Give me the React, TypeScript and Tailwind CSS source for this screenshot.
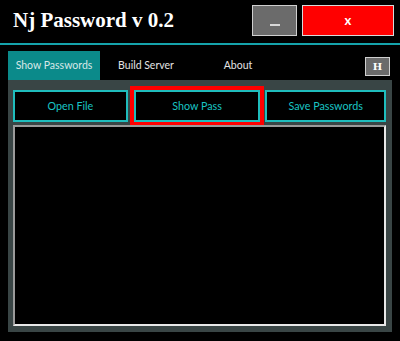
import React, { useState } from 'react';

const tabs = ['Show Passwords', 'Build Server', 'About'];

const App: React.FC = () => {
  const [tab, setTab] = useState('Show Passwords');
  const [text, setText] = useState('');

  return (
    <div className="w-[400px] h-[341px] bg-black overflow-hidden select-none" style={{ fontFamily: 'Lato, "Noto Sans", sans-serif' }}>
      {/* title bar */}
      <div className="flex items-start h-[43px] pl-[13px] pr-[6px] pt-[5px]">
        <h1 className="flex-1 mt-[3px] text-[21px] leading-[24px] font-bold text-white" style={{ fontFamily: '"Liberation Serif", "DejaVu Serif", serif' }}>
          Nj Password v 0.2
        </h1>
        <button className="w-[45px] h-[31px] bg-[#6b6b6b] border border-[#cfcfcf] flex items-center justify-center">
          <span className="block w-[10px] h-[2px] bg-[#d8d8d8] mt-[8px]" />
        </button>
        <button className="ml-[5px] w-[92px] h-[31px] bg-[#ff0000] border border-[#d8d8d8] text-white font-bold text-[13px] leading-none flex items-center justify-center">
          x
        </button>
      </div>
      <div className="h-[2px] bg-[#15a3ab]" />

      {/* tabs */}
      <div className="flex items-end h-[35px] pl-[8px] pr-[10px] pt-[6px]">
        {tabs.map((t) => (
          <button
            key={t}
            onClick={() => setTab(t)}
            className={`w-[92px] h-[29px] text-[10.5px] ${t === tab ? 'bg-[#0b8a8a] text-[#d8e8e8]' : 'text-[#e4e4e4]'}`}
          >
            {t}
          </button>
        ))}
        <div className="flex-1" />
        <button className="self-start mt-[6px] w-[25px] h-[19px] bg-[#6b6b6b] border border-[#d0d0d0] text-white text-[10px] font-bold leading-none flex items-center justify-center" style={{ fontFamily: '"DejaVu Serif", serif' }}>
          H
        </button>
      </div>

      {/* panel */}
      <div className="mx-[8px] h-[252px] bg-[#394545] pl-[5px] pr-[6px] pt-[10px] pb-[6px] flex flex-col">
        <div className="flex h-[32px] text-[10.75px] text-[#19c4c4]">
          <button className="w-[115px] h-full bg-black border-2 border-[#1fbdbd]">Open File</button>
          <button className="ml-[6px] w-[127px] h-full bg-black border-2 border-[#1fbdbd] outline-[4px] outline-solid outline-[#ff0000]">Show Pass</button>
          <button className="ml-[5px] w-[121px] h-full bg-black border-2 border-[#1fbdbd]">Save Passwords</button>
        </div>
        <textarea
          value={text}
          onChange={(e) => setText(e.target.value)}
          className="mt-[3px] flex-1 w-[373px] bg-black text-white border-2 border-t-[#9a9a9a] border-l-[#9a9a9a] border-r-[#e8e8e8] border-b-[#e8e8e8] resize-none outline-none text-[12px]"
        />
      </div>
    </div>
  );
};

export default App;
